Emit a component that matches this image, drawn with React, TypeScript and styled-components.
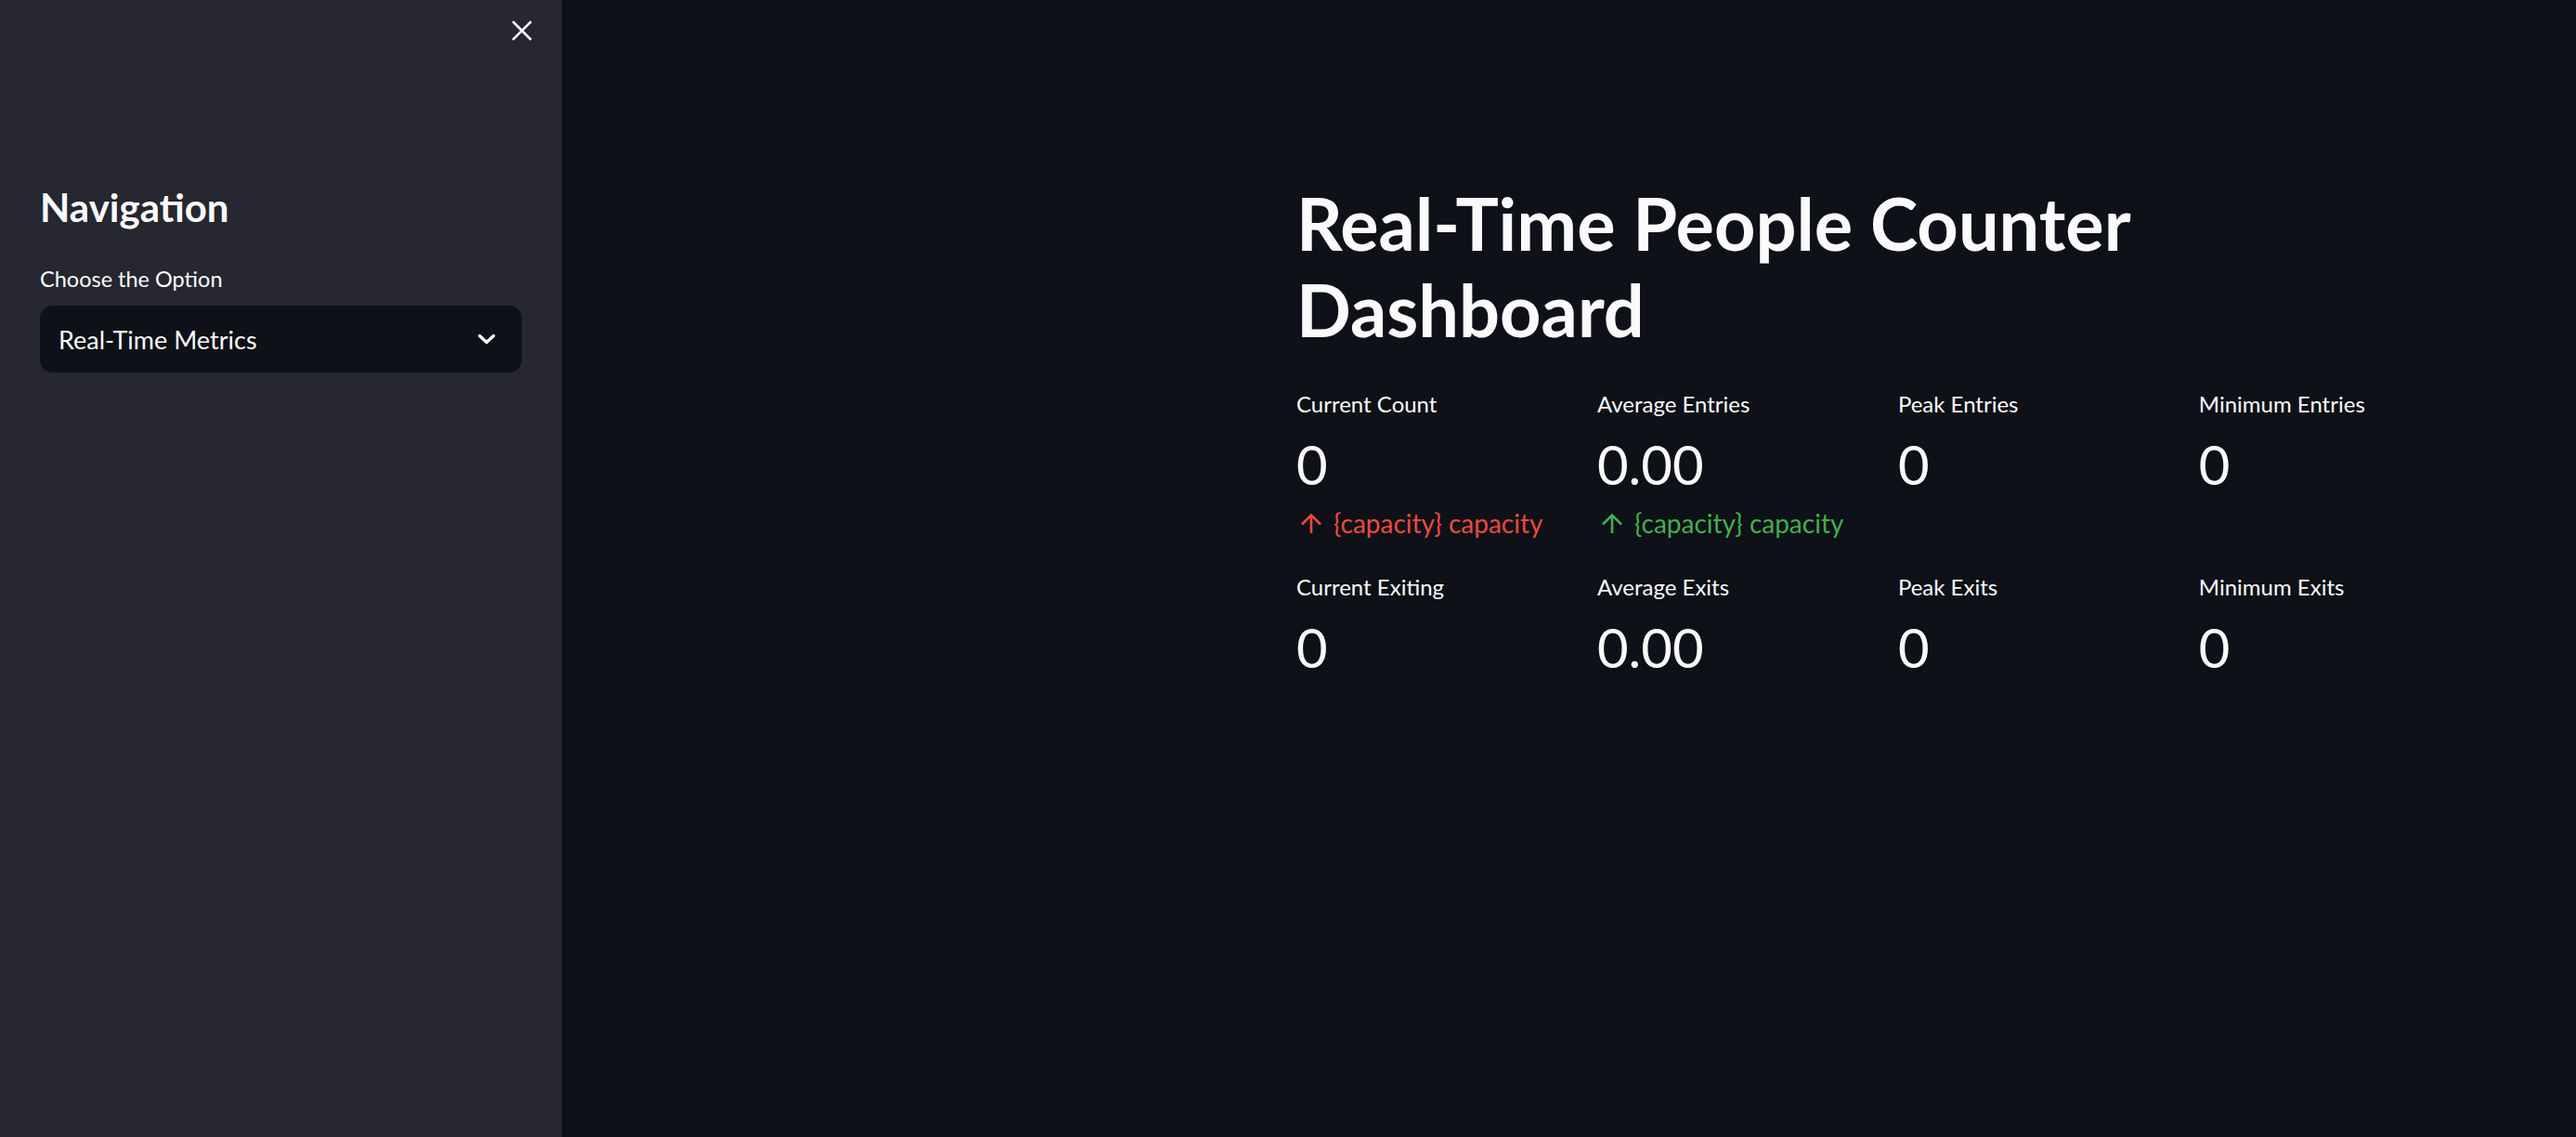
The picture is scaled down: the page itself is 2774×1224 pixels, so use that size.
import React from "react";
import styled, { createGlobalStyle } from "styled-components";

const GlobalStyle = createGlobalStyle`
  html, body {
    margin: 0;
    padding: 0;
    background: #0e1117;
  }
  * { box-sizing: border-box; }
  body {
    font-family: Lato, "Open Sans", "Noto Sans", sans-serif;
    color: #fafafa;
  }
`;

const Shell = styled.div`
  display: flex;
  width: 2774px;
  height: 1224px;
  background: #0e1117;
  overflow: hidden;
`;

const Sidebar = styled.aside`
  width: 605px;
  flex: 0 0 605px;
  background: #262730;
  padding: 0 43px;
  display: flex;
  flex-direction: column;
`;

const CloseRow = styled.div`
  height: 66px;
  display: flex;
  align-items: center;
  justify-content: flex-end;
  margin-right: -20px;
`;

const CloseButton = styled.button`
  width: 40px;
  height: 40px;
  display: flex;
  align-items: center;
  justify-content: center;
  background: transparent;
  border: none;
  padding: 0;
  color: #fafafa;
  cursor: pointer;
`;

const SideHeading = styled.h2`
  margin: 131px 0 0;
  font-size: 42px;
  line-height: 52px;
  font-weight: 700;
  color: #fafafa;
`;

const FieldLabel = styled.label`
  margin-top: 35px;
  font-size: 23.5px;
  line-height: 32px;
  color: #fafafa;
`;

const Select = styled.div`
  margin-top: 13px;
  height: 72px;
  border-radius: 14px;
  background: #0e1117;
  display: flex;
  align-items: center;
  justify-content: space-between;
  padding: 0 28px 0 20px;
  font-size: 27px;
  color: #fafafa;
`;

const Main = styled.main`
  flex: 1;
  display: flex;
  justify-content: flex-end;
  padding: 194px 111px 0 0;
`;

const Block = styled.section`
  width: 1267px;
  display: flex;
  flex-direction: column;
`;

const Title = styled.h1`
  margin: 0;
  font-size: 77.5px;
  line-height: 93px;
  font-weight: 700;
  color: #fafafa;
  width: 1000px;
`;

const MetricGrid = styled.div<{ $top: number }>`
  margin-top: ${(p) => p.$top}px;
  display: grid;
  grid-template-columns: repeat(4, 1fr);
  column-gap: 28.8px;
`;

const Metric = styled.div`
  display: flex;
  flex-direction: column;
`;

const MetricLabel = styled.div`
  font-size: 24px;
  line-height: 36px;
  color: #fafafa;
`;

const MetricValue = styled.div`
  margin-top: 11px;
  font-size: 58px;
  line-height: 72px;
  color: #fafafa;
`;

const Delta = styled.div<{ $color: string }>`
  margin-top: 9px;
  padding-left: 4px;
  display: flex;
  align-items: center;
  gap: 12px;
  font-size: 28px;
  line-height: 36px;
  color: ${(p) => p.$color};
`;

const CloseIcon = () => (
  <svg width="22" height="22" viewBox="0 0 22 22" fill="none">
    <path d="M2 2 L20 20 M20 2 L2 20" stroke="#fafafa" strokeWidth="2.6" strokeLinecap="square" />
  </svg>
);

const Chevron = () => (
  <svg width="20" height="12" viewBox="0 0 20 12" fill="none">
    <path d="M2.5 2.5 L10 9.5 L17.5 2.5" stroke="#fafafa" strokeWidth="3.4" strokeLinecap="round" strokeLinejoin="round" />
  </svg>
);

const ArrowUp = ({ color }: { color: string }) => (
  <svg width="24" height="23" viewBox="0 0 24 23" fill="none">
    <path d="M12 22 V2.5 M2 12.5 L12 2.5 L22 12.5" stroke={color} strokeWidth="2.6" />
  </svg>
);

type M = { label: string; value: string; delta?: { color: string } };

const row1: M[] = [
  { label: "Current Count", value: "0", delta: { color: "#ea4a3f" } },
  { label: "Average Entries", value: "0.00", delta: { color: "#45ad4e" } },
  { label: "Peak Entries", value: "0" },
  { label: "Minimum Entries", value: "0" },
];

const row2: M[] = [
  { label: "Current Exiting", value: "0" },
  { label: "Average Exits", value: "0.00" },
  { label: "Peak Exits", value: "0" },
  { label: "Minimum Exits", value: "0" },
];

const MetricRow = ({ items, top }: { items: M[]; top: number }) => (
  <MetricGrid $top={top}>
    {items.map((m) => (
      <Metric key={m.label}>
        <MetricLabel>{m.label}</MetricLabel>
        <MetricValue>{m.value}</MetricValue>
        {m.delta && (
          <Delta $color={m.delta.color}>
            <ArrowUp color={m.delta.color} />
            <span>{"{capacity} capacity"}</span>
          </Delta>
        )}
      </Metric>
    ))}
  </MetricGrid>
);

export default function App() {
  return (
    <>
      <GlobalStyle />
      <Shell>
        <Sidebar>
          <CloseRow>
            <CloseButton aria-label="Close sidebar">
              <CloseIcon />
            </CloseButton>
          </CloseRow>
          <SideHeading>Navigation</SideHeading>
          <FieldLabel>Choose the Option</FieldLabel>
          <Select>
            <span>Real-Time Metrics</span>
            <Chevron />
          </Select>
        </Sidebar>
        <Main>
          <Block>
            <Title>Real-Time People Counter Dashboard</Title>
            <MetricRow items={row1} top={37} />
            <MetricRow items={row2} top={33} />
          </Block>
        </Main>
      </Shell>
    </>
  );
}
